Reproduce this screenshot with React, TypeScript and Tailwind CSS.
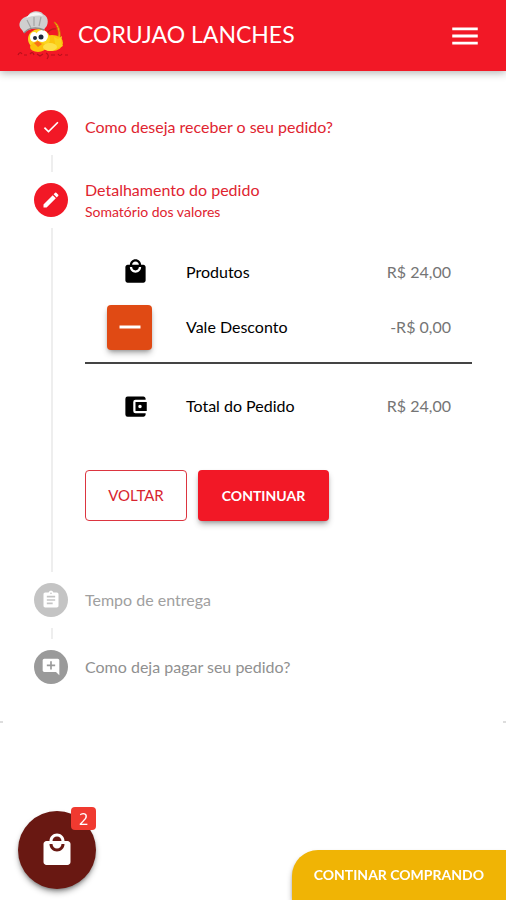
import React from 'react';
import {
  MdAccountBalanceWallet,
  MdAddComment,
  MdAssignment,
  MdCheck,
  MdEdit,
  MdLocalMall,
  MdMenu,
  MdRemove,
} from 'react-icons/md';

interface StepProps {
  icon: React.ReactNode;
  title: string;
  subtitle?: string;
  circleClass: string;
  textClass: string;
}

const Logo: React.FC = () => (
  <svg viewBox="0 0 54 54" className="w-[54px] h-[54px] shrink-0" aria-hidden="true">
    {/* cauda */}
    <path d="M37 36 C44 30 44 20 38 13 C43 14 46 25 43 34 Z" fill="#f5c518" stroke="#d97706" strokeWidth="1" />
    <path d="M30 25 q5 -6 10 -5" fill="none" stroke="#b91c1c" strokeWidth="1.2" />
    {/* corpo */}
    <ellipse cx="36" cy="34" rx="11" ry="8" fill="#fbc30d" />
    <path d="M38 28 l4 2 4 -3 -1 7 2 3 -7 3 Z" fill="#f9d21b" />
    <ellipse cx="23" cy="30" rx="11" ry="10" fill="#fbd51f" />
    <ellipse cx="22" cy="38" rx="8" ry="5" fill="#fbc30d" />
    <ellipse cx="34" cy="38" rx="7" ry="4" fill="#fde047" />
    {/* olhos e bico */}
    <ellipse cx="18" cy="28" rx="4" ry="5" fill="#fff" />
    <ellipse cx="26" cy="27" rx="6" ry="6" fill="#fff" />
    <circle cx="19" cy="29" r="2" fill="#1e293b" />
    <circle cx="25" cy="28" r="2.5" fill="#1e293b" />
    <path d="M18 34 l4 -2 4 3 -4 3 Z" fill="#f97316" />
    {/* chapéu */}
    <path d="M6 21 C0 15 6 8 12 7 C14 1 25 1 27 5 C34 8 32 17 29 19 L28 21 C20 18 12 20 8 24 Z" fill="#cfcfcf" />
    <path d="M10 9 C15 2 24 2 27 7 C22 6 14 7 10 9 Z" fill="#f5f5f5" />
    <path d="M11 11 l4 8 M18 8 l0 9 M25 8 l-2 9" stroke="#a3a3a3" strokeWidth="1.2" fill="none" />
    <path d="M8 24 C13 18 21 18 28 21" stroke="#8a8a8a" strokeWidth="1.5" fill="none" />
    {/* assinatura */}
    <path
      d="M2 46 q2 -4 4 -1 M8 46 h3 M14 45 q3 -3 4 1 M21 45 l3 2 3 -2 M30 44 q4 2 1 6 M35 46 h4 M42 45 q2 3 4 0 M49 46 h3"
      stroke="#b80f1b"
      strokeWidth="1.2"
      fill="none"
    />
  </svg>
);

const Step: React.FC<StepProps> = ({ icon, title, subtitle, circleClass, textClass }) => (
  <div className="flex items-center gap-[17px]">
    <span className={`flex size-[34px] shrink-0 items-center justify-center rounded-full text-xl text-white ${circleClass}`}>
      {icon}
    </span>
    <div className={textClass}>
      <h2 className="text-base leading-6">{title}</h2>
      {subtitle && <p className="text-sm leading-5">{subtitle}</p>}
    </div>
  </div>
);

const App: React.FC = () => {
  return (
    <div className="min-h-screen bg-white font-['Lato',sans-serif]">
      <header className="flex h-[71px] items-center bg-[#f21826] pl-4 pr-6 text-white shadow-[0_2px_8px_rgba(0,0,0,0.3)]">
        <Logo />
        <h1 className="ml-2 flex-1 pb-1 text-[23px] leading-8">CORUJAO LANCHES</h1>
        <button type="button" aria-label="Menu" className="text-[34px]">
          <MdMenu />
        </button>
      </header>

      <main>
        <ol className="px-[34px] pt-[39px]">
          <li>
            <Step
              icon={<MdCheck />}
              title="Como deseja receber o seu pedido?"
              circleClass="bg-[#f21826]"
              textClass="text-[#e02430]"
            />
            <div className="my-[11px] ml-[17px] h-[17px] w-[2px] bg-[#eeeeee]" />
          </li>

          <li>
            <div className="h-[34px]">
              <Step
                icon={<MdEdit />}
                title="Detalhamento do pedido"
                subtitle="Somatório dos valores"
                circleClass="bg-[#f21826]"
                textClass="-my-[5px] text-[#e02430]"
              />
            </div>
            <div className="my-[11px] ml-[17px] border-l-2 border-[#eeeeee] pl-8 pt-4 pb-[51px]">
              <table className="w-full">
                <tbody>
                  <tr className="h-[55px]">
                    <td className="w-[101px] pl-[37px] text-[27px]">
                      <MdLocalMall />
                    </td>
                    <th scope="row" className="text-left font-normal">Produtos</th>
                    <td className="pr-[21px] text-right text-[#757575]">R$ 24,00</td>
                  </tr>
                  <tr className="h-14">
                    <td className="pl-[22px]">
                      <button
                        type="button"
                        aria-label="Remover vale desconto"
                        className="flex size-[45px] items-center justify-center rounded bg-[#e04a14] text-4xl text-white shadow-md shadow-black/30"
                      >
                        <MdRemove />
                      </button>
                    </td>
                    <th scope="row" className="text-left font-normal">Vale Desconto</th>
                    <td className="pr-[21px] text-right text-[#757575]">-R$ 0,00</td>
                  </tr>
                  <tr>
                    <td colSpan={3} className="pt-[7px] pb-[14px]">
                      <hr className="border-t-2 border-[#444444]" />
                    </td>
                  </tr>
                  <tr className="h-14">
                    <td className="pl-[37px] text-[27px]">
                      <MdAccountBalanceWallet />
                    </td>
                    <th scope="row" className="text-left font-normal">Total do Pedido</th>
                    <td className="pr-[21px] text-right text-[#757575]">R$ 24,00</td>
                  </tr>
                </tbody>
              </table>
              <div className="mt-9 flex gap-[11px]">
                <button type="button" className="h-[51px] w-[102px] rounded border border-[#dc3540] text-[15px] text-[#d8242f]">
                  VOLTAR
                </button>
                <button type="button" className="h-[51px] w-[131px] rounded bg-[#f21826] text-sm font-bold text-white shadow-md shadow-black/30">
                  CONTINUAR
                </button>
              </div>
            </div>
          </li>

          <li>
            <Step
              icon={<MdAssignment />}
              title="Tempo de entrega"
              circleClass="bg-[#c4c4c4]"
              textClass="text-[#a0a0a0]"
            />
            <div className="my-[11px] ml-[17px] h-[11px] w-[2px] bg-[#eeeeee]" />
          </li>

          <li>
            <Step
              icon={<MdAddComment />}
              title="Como deja pagar seu pedido?"
              circleClass="bg-[#9a9a9a]"
              textClass="text-[#909090]"
            />
          </li>
        </ol>
        {/* cantos do painel */}
        <div className="mt-[37px] flex justify-between">
          <span className="h-[2px] w-[3px] bg-[#dddddd]" />
          <span className="h-[2px] w-[3px] bg-[#dddddd]" />
        </div>
      </main>

      <footer className="fixed inset-x-0 bottom-0 flex items-end justify-between pl-[18px]">
        <button
          type="button"
          aria-label="Carrinho"
          className="relative mb-[11px] flex size-[78px] items-center justify-center rounded-full bg-[#691812] text-4xl text-white shadow-md shadow-black/40"
        >
          <MdLocalMall />
          <span className="absolute -top-1 right-0 flex h-[23px] w-[25px] items-center justify-center rounded bg-[#f03a30] font-['Noto_Sans',sans-serif] text-base">
            2
          </span>
        </button>
        <button
          type="button"
          className="h-[50px] rounded-tl-[26px] bg-[#f0b405] px-[22px] text-sm font-bold text-white shadow-md shadow-black/40"
        >
          CONTINAR COMPRANDO
        </button>
      </footer>
    </div>
  );
};

export default App;
